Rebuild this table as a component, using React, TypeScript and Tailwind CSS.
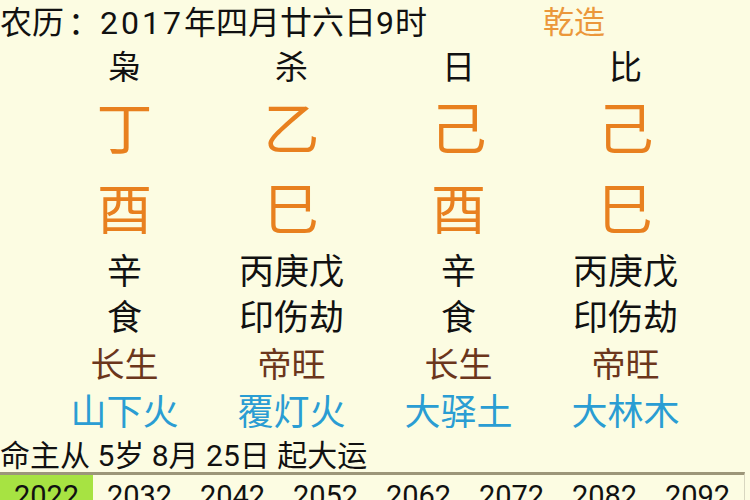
const font = { fontFamily: '"Roboto", "Noto Sans CJK SC", sans-serif' };

const cols = [
  { god: '枭', stem: '丁', branch: '酉', hidden: '辛', ten: '食', stage: '长生', nayin: '山下火' },
  { god: '杀', stem: '乙', branch: '巳', hidden: '丙庚戊', ten: '印伤劫', stage: '帝旺', nayin: '覆灯火' },
  { god: '日', stem: '己', branch: '酉', hidden: '辛', ten: '食', stage: '长生', nayin: '大驿土' },
  { god: '比', stem: '己', branch: '巳', hidden: '丙庚戊', ten: '印伤劫', stage: '帝旺', nayin: '大林木' },
];

const years = ['2022', '2032', '2042', '2052', '2062', '2072', '2082', '2092'];

function Row({ field, className }: { field: keyof (typeof cols)[number]; className: string }) {
  return (
    <div className={`grid grid-cols-4 w-[668px] ml-[41px] text-center ${className}`}>
      {cols.map((c, i) => (
        <div key={i} className="whitespace-nowrap">
          {c[field]}
        </div>
      ))}
    </div>
  );
}

export default function App() {
  return (
    <div className="w-[750px] h-[500px] overflow-hidden bg-[#fcfce2] text-[#111]" style={font}>
      {/* header */}
      <div className="flex items-center h-[42px] pt-[3px]">
        <div className="w-[543px] text-[32px] leading-[42px] whitespace-nowrap">
          农历<span className="ml-[4px]">：</span>
          <span className="tracking-[3px]">2017</span>年四月廿六日
          <span className="tracking-[1px]">9</span>时
        </div>
        <div className="text-[31px] leading-[42px] text-[#eb973a]">乾造</div>
      </div>

      <Row field="god" className="text-[33px] leading-[51px]" />
      <Row field="stem" className="text-[56px] leading-[74px] text-[#e8801f]" />
      <Row field="branch" className="text-[55px] leading-[86px] text-[#e8801f]" />
      <Row field="hidden" className="text-[35px] leading-[40px]" />
      <Row field="ten" className="text-[35px] leading-[52px]" />
      <Row field="stage" className="text-[34px] leading-[40px] text-[#6b361c]" />
      <Row field="nayin" className="text-[36px] leading-[56px] text-[#2a9dd3]" />

      <div className="text-[30px] leading-[30px] whitespace-nowrap">命主从 5岁 8月 25日 起大运</div>

      {/* 大运 years */}
      <div className="mt-[1px] w-[745px] border-t-[3px] border-r border-t-[#9c9679] border-r-[#d8d6c0] grid grid-cols-8">
        {years.map((y, i) => (
          <div
            key={y}
            className={`h-[40px] pt-[3px] text-center text-[29px] leading-[36px] ${i === 0 ? 'bg-[#a7e342]' : ''}`}
          >
            {y}
          </div>
        ))}
      </div>
    </div>
  );
}
